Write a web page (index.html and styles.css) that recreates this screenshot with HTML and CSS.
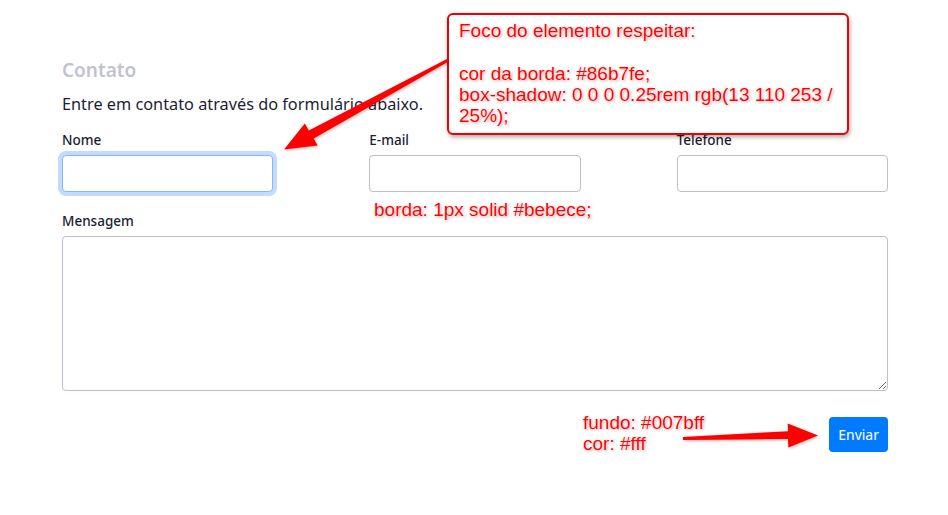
FILE: index.html
```html
<!DOCTYPE html>
<html lang="pt-BR">
<head>
<meta charset="utf-8">
<title>Contato</title>
<link rel="stylesheet" href="styles.css">
</head>
<body>
<main class="page">
  <h2 class="title">Contato</h2>
  <p class="lead">Entre em contato através do formulário abaixo.</p>
  <form class="form">
    <div class="row3">
      <div class="field">
        <label class="label" for="nome">Nome</label>
        <input class="control focus" id="nome" type="text">
      </div>
      <div class="field">
        <label class="label" for="email">E-mail</label>
        <input class="control" id="email" type="email">
      </div>
      <div class="field">
        <label class="label" for="tel">Telefone</label>
        <input class="control" id="tel" type="tel">
      </div>
    </div>
    <div class="field msg">
      <label class="label" for="mensagem">Mensagem</label>
      <textarea class="control area" id="mensagem"></textarea>
    </div>
    <div class="actions">
      <button class="btn" type="button">Enviar</button>
    </div>
  </form>
</main>

<div class="callout">
  <div>Foco do elemento respeitar:</div>
  <div>&nbsp;</div>
  <div>cor da borda: #86b7fe;</div>
  <div>box-shadow: 0 0 0 0.25rem rgb(13 110 253 /</div>
  <div>25%);</div>
</div>
<div class="note note-borda">borda: 1px solid #bebece;</div>
<div class="note note-btn">fundo: #007bff<br>cor: #fff</div>

<svg class="arrows" width="948" height="515" viewBox="0 0 948 515">
  <polygon fill="#f00" points="447.4,58.8 308.8,130.6 304.8,123.4 284,149.5 317.6,145.6 313.6,138.4 448.6,61.4"/>
  <polygon fill="#f00" points="683,437 788,431.2 787.7,423.5 818,435.5 788.3,447.5 788,439 683,440"/>
</svg>
</body>
</html>
```
FILE: styles.css
```css
* { box-sizing: border-box; }
html, body { margin: 0; padding: 0; background: #fff; }
body {
  position: relative;
  width: 948px;
  height: 515px;
  overflow: hidden;
  font-family: "Noto Sans", "Open Sans", sans-serif;
  color: #1d1d35;
}
.page {
  width: 888px;
  padding: 58px 0 0 62px;
}
.title {
  margin: 0;
  font-size: 19px;
  line-height: 24px;
  font-weight: 600;
  color: #c2c2d2;
}
.lead {
  margin: 10px 0 0;
  font-size: 16.3px;
  line-height: 24px;
}
.form { margin-top: 14px; }
.row3 {
  display: grid;
  grid-template-columns: repeat(3, 1fr);
  column-gap: 96px;
}
.label {
  display: block;
  font-size: 13.5px;
  line-height: 20px;
  margin-bottom: 5px;
  font-weight: 500;
}
.control {
  display: block;
  width: 100%;
  height: 37px;
  border: 1px solid #bebece;
  border-radius: 4px;
  background: #fff;
  font: inherit;
  margin: 0;
  padding: 6px 12px;
}
.control.focus {
  border-color: #86b7fe;
  box-shadow: 0 0 0 0.25rem rgb(13 110 253 / 25%);
  outline: none;
}
.msg { margin-top: 19px; }
.area {
  height: 155px;
  resize: vertical;
}
.actions {
  display: flex;
  justify-content: flex-end;
  margin-top: 26px;
}
.btn {
  height: 35px;
  padding: 0 9px;
  border: none;
  border-radius: 4px;
  background: #007bff;
  color: #fff;
  font-family: "Noto Sans", sans-serif;
  font-size: 14px;
}
.callout {
  position: absolute;
  left: 447px;
  top: 13px;
  width: 402px;
  height: 122px;
  border: 2px solid #ee0000;
  border-radius: 6px;
  background: #fff;
  box-shadow: 1px 2px 4px rgba(0,0,0,.35);
  padding: 5px 0 0 10px;
  font-family: "Liberation Sans", Arial, sans-serif;
  font-size: 19px;
  line-height: 21.3px;
  color: #ff0000;
  text-shadow: 0 0 1px #fff, 0 0 2px #fff, 1px 1px 3px rgba(0,0,0,.4);
}
.note {
  position: absolute;
  font-family: "Liberation Sans", Arial, sans-serif;
  font-size: 19px;
  line-height: 21px;
  color: #ff0000;
  text-shadow: 0 0 1px #fff, 0 0 2px #fff, 1px 1px 3px rgba(0,0,0,.4);
}
.note-borda { left: 374px; top: 199px; }
.note-btn { left: 583px; top: 412px; }
.arrows {
  position: absolute;
  left: 0;
  top: 0;
  pointer-events: none;
  filter: drop-shadow(1px 1px 1.5px rgba(0,0,0,.3));
}
```
